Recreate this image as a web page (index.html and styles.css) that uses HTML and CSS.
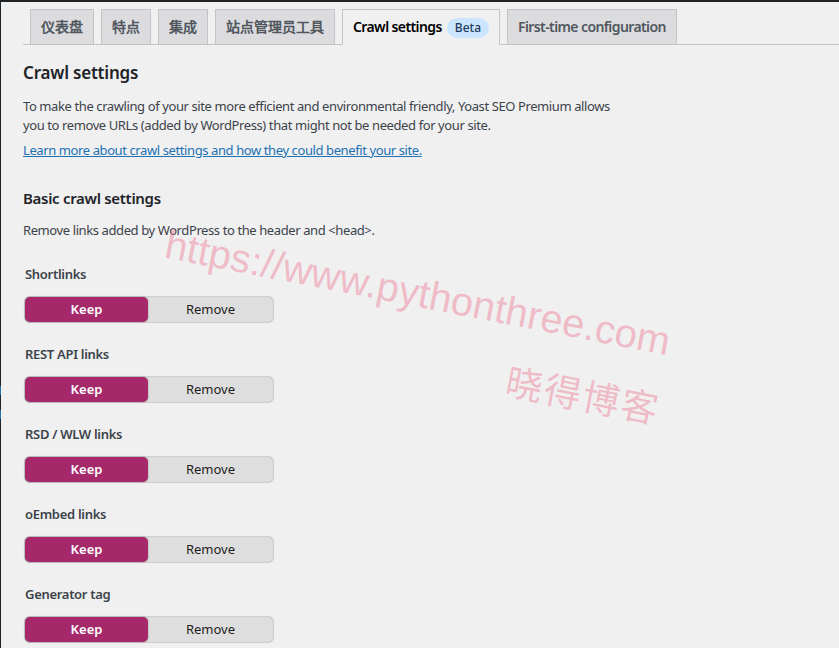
FILE: index.html
```html
<!DOCTYPE html>
<html lang="zh-CN">
<head>
  <meta charset="UTF-8">
  <link rel="stylesheet" href="styles.css">
  <title>Crawl settings</title>
</head>
<body>
  <div class="layout">
    <div class="edge">
      <span class="blip one"></span>
      <span class="blip two"></span>
    </div>
    <div class="wrap">
      <div class="nav-tabs">
        <a class="nav-tab cn">仪表盘</a>
        <a class="nav-tab cn">特点</a>
        <a class="nav-tab cn">集成</a>
        <a class="nav-tab cn">站点管理员工具</a>
        <a class="nav-tab active">Crawl settings <span class="beta">Beta</span></a>
        <a class="nav-tab">First-time configuration</a>
      </div>

      <h2 class="title">Crawl settings</h2>
      <p class="intro">To make the crawling of your site more efficient and environmental friendly, Yoast SEO Premium allows<br>you to remove URLs (added by WordPress) that might not be needed for your site.</p>
      <p class="intro"><a class="more" href="#">Learn more about crawl settings and how they could benefit your site.</a></p>

      <h3 class="subtitle">Basic crawl settings</h3>
      <p class="intro">Remove links added by WordPress to the header and &lt;head&gt;.</p>

      <div class="setting">
        <div class="label">Shortlinks</div>
        <div class="switch"><span class="opt on">Keep</span><span class="opt">Remove</span></div>
      </div>
      <div class="setting">
        <div class="label">REST API links</div>
        <div class="switch"><span class="opt on">Keep</span><span class="opt">Remove</span></div>
      </div>
      <div class="setting">
        <div class="label">RSD / WLW links</div>
        <div class="switch"><span class="opt on">Keep</span><span class="opt">Remove</span></div>
      </div>
      <div class="setting">
        <div class="label">oEmbed links</div>
        <div class="switch"><span class="opt on">Keep</span><span class="opt">Remove</span></div>
      </div>
      <div class="setting">
        <div class="label">Generator tag</div>
        <div class="switch"><span class="opt on">Keep</span><span class="opt">Remove</span></div>
      </div>
    </div>
  </div>

  <div class="mark url">https://www.pythonthree.com</div>
  <div class="mark name">晓得博客</div>
</body>
</html>
```

FILE: styles.css
```css
html, body {
  margin: 0;
  height: 100%;
  overflow: hidden;
}

body {
  background: #f0f0f1;
  border-top: 2px solid #1d2327;
  box-sizing: border-box;
  font-family: "Noto Sans", "Open Sans", Arial, sans-serif;
  font-size: 13px;
  color: #3c434a;
  position: relative;
}

.layout {
  display: flex;
  min-height: 100%;
}

.edge {
  width: 1px;
  background: #1d2327;
  position: relative;
  flex: none;
}

.blip {
  position: absolute;
  left: 0;
  width: 1px;
  height: 9px;
  background: #2271b1;
}
.blip.one { top: 384px; }
.blip.two { top: 408px; }

.wrap {
  flex: 1;
  padding-left: 22px;
}

/* tabs */
.nav-tabs {
  display: flex;
  padding-top: 7px;
  border-bottom: 1px solid #c3c4c7;
}

.nav-tab {
  margin-left: 7px;
  padding: 5px 10px;
  height: 24px;
  line-height: 24px;
  font-size: 14px;
  font-weight: 600;
  letter-spacing: -0.6px;
  color: #50575e;
  background: #dcdcde;
  border: 1px solid #c3c4c7;
  border-bottom: none;
  margin-bottom: -1px;
  white-space: nowrap;
}

.nav-tab.cn {
  letter-spacing: 0;
}

.nav-tab.active {
  background: #f0f0f1;
  color: #000;
  border-bottom: 1px solid #f0f0f1;
}

.beta {
  display: inline-block;
  margin-left: 2px;
  padding: 0 8px;
  height: 20px;
  line-height: 20px;
  border-radius: 10px;
  background: #cce5ff;
  color: #1e3a5f;
  font-size: 12px;
  font-weight: 500;
  letter-spacing: 0;
}

/* text */
.title {
  margin: 16px 0 0;
  font-size: 17px;
  font-weight: 600;
  color: #1d2327;
  letter-spacing: -0.2px;
}

.intro {
  margin: 13px 0 0;
  line-height: 19px;
  letter-spacing: -0.4px;
}

.intro + .intro { margin-top: 6px; }

.more {
  color: #2271b1;
  text-decoration: underline;
}

.subtitle {
  margin: 28px 0 0;
  font-size: 15px;
  font-weight: 600;
  color: #1d2327;
  letter-spacing: -0.3px;
}

/* toggles */
.setting {
  margin-top: 24px;
  margin-left: 1px;
}
.setting + .setting { margin-top: 21px; }

.label {
  margin-left: 1px;
  font-weight: 600;
  color: #3c434a;
  line-height: 20px;
  letter-spacing: -0.3px;
}

.switch {
  display: flex;
  margin-top: 12px;
  width: 250px;
  height: 27px;
  box-sizing: border-box;
  border-radius: 6px;
  background: #dedede;
  box-shadow: inset 0 0 2px rgba(0, 0, 0, 0.25);
  padding: 1px;
}

.opt {
  flex: 1;
  text-align: center;
  line-height: 25px;
  color: #1e1e1e;
}

.opt.on {
  flex: none;
  width: 123px;
  background: #a4286a;
  color: #fff;
  font-weight: 600;
  border-radius: 5px;
  box-shadow: 0 0 2px rgba(0, 0, 0, 0.35);
}

/* watermark */
.mark {
  position: absolute;
  color: rgba(236, 120, 145, 0.45);
  white-space: nowrap;
  pointer-events: none;
  transform-origin: left top;
}

.mark.url {
  left: 170px;
  top: 220px;
  font-size: 40px;
  font-family: "Liberation Sans", Arial, sans-serif;
  transform: rotate(11deg);
}

.mark.name {
  left: 512px;
  top: 350px;
  font-size: 37px;
  letter-spacing: 2px;
  font-family: "Noto Sans CJK SC", sans-serif;
  transform: rotate(11deg);
}
```
